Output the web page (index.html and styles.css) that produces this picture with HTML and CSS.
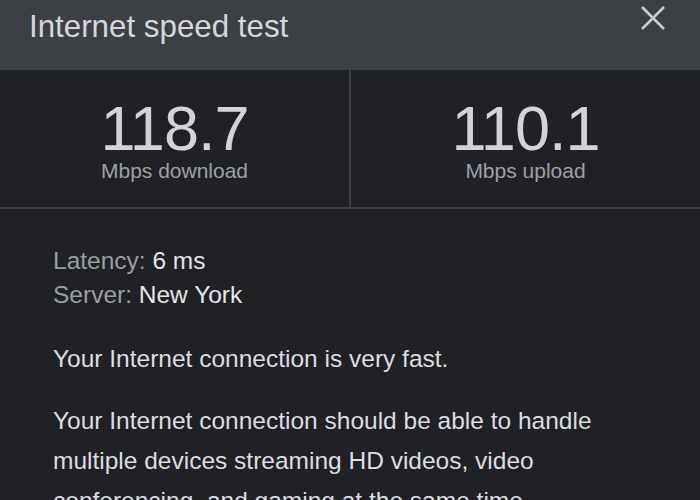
FILE: index.html
```html
<!DOCTYPE html>
<html>
  <head>
    <meta charset="utf-8">
    <title>Internet speed test</title>
    <link rel="stylesheet" href="styles.css">
  </head>
  <body>
    <div class="dialog">
      <div class="header">
        <h1 class="title">Internet speed test</h1>
        <button class="close" aria-label="Close">
          <svg width="26" height="26" viewBox="0 0 26 26">
            <path d="M2 2 L24 24 M24 2 L2 24" stroke="#c9cacc" stroke-width="2.6" fill="none"/>
          </svg>
        </button>
      </div>

      <div class="stats">
        <div class="stat">
          <div class="stat-value">118.7</div>
          <div class="stat-label">Mbps download</div>
        </div>
        <div class="stat">
          <div class="stat-value">110.1</div>
          <div class="stat-label">Mbps upload</div>
        </div>
      </div>

      <div class="details">
        <div class="meta">
          <div><span class="meta-key">Latency:</span> 6 ms</div>
          <div><span class="meta-key">Server:</span> New York</div>
        </div>
        <p class="verdict">Your Internet connection is very fast.</p>
        <p class="advice">Your Internet connection should be able to handle multiple devices streaming HD videos, video conferencing, and gaming at the same time.</p>
      </div>
    </div>
  </body>
</html>
```

FILE: styles.css
```css
*{
  margin: 0;
  padding: 0;
  box-sizing: border-box;
}
body{
  overflow: hidden;
  background-color: #202124;
  font-family: "Liberation Sans", Arial, sans-serif;
}
.dialog{
  width: 700px;
  height: 500px;
}
.header{
  height: 70px;
  background-color: #3c3f43;
  display: flex;
  justify-content: space-between;
  align-items: flex-start;
  padding: 5px 34px 0 29px;
}
.title{
  font-size: 31.3px;
  font-weight: normal;
  line-height: 31px;
  margin-top: 6px;
  color: #d6d7d9;
}
.close{
  background: none;
  border: 0;
  width: 26px;
  height: 26px;
  display: block;
}
.close svg{
  display: block;
}
.stats{
  display: flex;
  border-bottom: 2px solid #3c4043;
}
.stat{
  flex: 1;
  height: 137px;
  padding-top: 27px;
  text-align: center;
}
.stat + .stat{
  border-left: 2px solid #3c4043;
}
.stat-value{
  font-size: 63px;
  line-height: 62px;
  letter-spacing: -1px;
  color: #d2d3d5;
}
.stat-label{
  font-size: 21px;
  line-height: 20px;
  margin-top: 2px;
  color: #9da0a4;
}
.details{
  padding: 35px 53px 0 53px;
  color: #dcdde0;
  font-size: 24.5px;
}
.meta{
  line-height: 34px;
  color: #e4e5e7;
}
.meta-key{
  color: #9a9da1;
}
.verdict{
  line-height: 39px;
  margin-top: 27px;
}
.advice{
  line-height: 40px;
  margin-top: 23px;
  width: 580px;
}
```
